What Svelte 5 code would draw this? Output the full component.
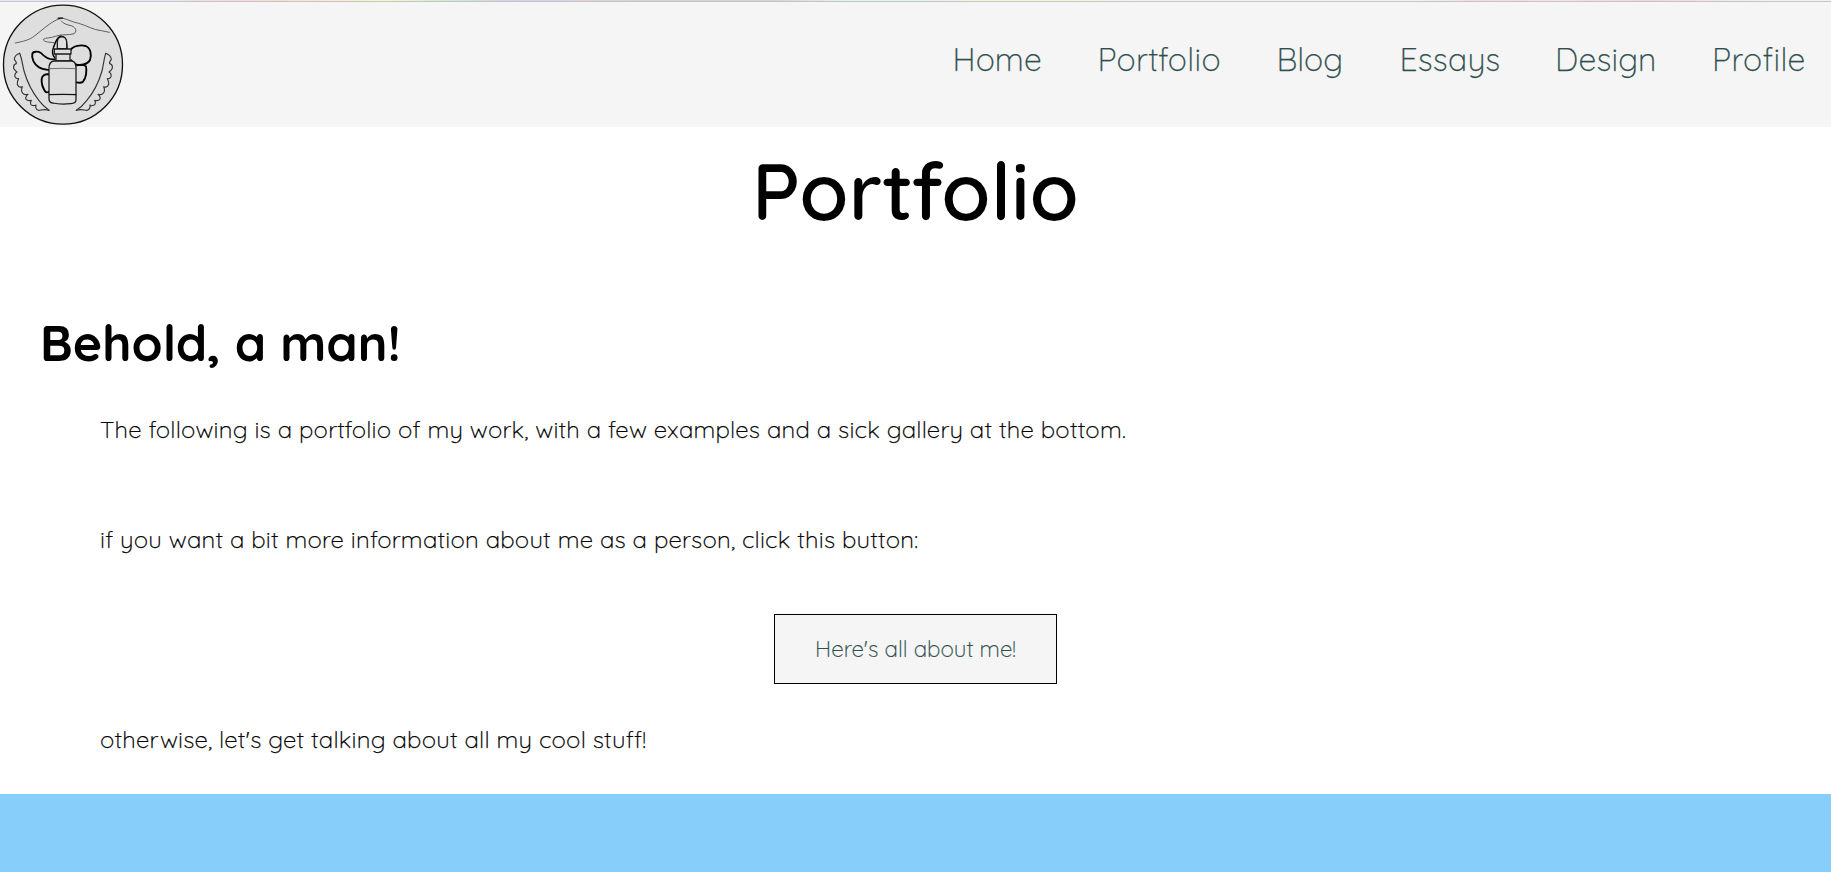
<script>
  const links = [
    { label: 'Home', track: 0.1 },
    { label: 'Portfolio', track: 0.4 },
    { label: 'Blog', track: 0.1 },
    { label: 'Essays', track: 0.15 },
    { label: 'Design', track: 0.15 },
    { label: 'Profile', track: 0.4 }
  ];
</script>

<div class="strip"></div>
<header>
  <svg class="logo" viewBox="0 6 390 375" width="130" height="125" fill="none" stroke="#111" stroke-linecap="round" stroke-linejoin="round">
    <circle cx="189" cy="194" r="178.5" fill="#dedede" stroke-width="4" />
    <g stroke="#555" stroke-width="2.8">
      <path d="M46 129C70 124 88 120 102 109C122 94 148 69 174 57L188 55C204 58 216 66 236 70C262 77 280 90 304 92L328 97" />
      <path d="M184 63C190 73 204 74 216 78C229 84 231 95 222 101C206 107 185 101 166 109C151 115 138 112 130 118C132 128 150 126 162 128" />
    </g>
    <path d="M175 55L187 54" stroke="#222" stroke-width="5" />
    <g stroke="#000" stroke-width="5.6">
      <path d="M165 174C156 166 156 151 160 144C165 130 170 112 182 109C194 108 200 118 201 146" stroke-width="4.4" />
      <path d="M213 149C219 137 243 134 257 138C273 144 275 166 270 180C263 193 240 199 226 192C217 188 216 184 214 181" />
      <path d="M164 178C148 180 132 169 123 159C113 153 99 154 97 161C94 174 102 194 117 202C127 209 138 209 148 210" />
      <path d="M228 196C240 194 253 194 258 199C261 214 258 235 249 245C243 250 234 248 229 247" />
      <path d="M147 223C134 221 126 227 125 237C124 249 130 266 136 275C140 279 144 277 148 275" />
    </g>
    <g fill="#dedede" stroke-width="3.8" stroke="#1a1a1a">
      <path d="M172 146V125C173 106 198 105 200 125V146Z" />
      <path d="M168 160H210V183H168Z" />
      <path d="M163 147H213V162H163Z" />
      <path d="M162 183H215C224 184 228 190 228 204V300C228 308 223 310 213 311C195 313 174 313 158 309C150 308 147 304 147 297V205C147 190 152 184 162 183Z" />
    </g>
    <path d="M148 206Q188 204 228 206" stroke="#555" stroke-width="2.4" />
    <path d="M148 284Q188 282 228 284" stroke-width="3.6" />
    <g stroke="#333" stroke-width="3.4">
      <path d="M59 160C50 162 43 170 43 178C48 184 50 187 49 191C42 193 40 198 41 205C44 211 47 214 51 216C45 219 44 225 45 230C48 236 52 237 56 236C52 244 50 252 54 257C58 263 63 262 67 260C63 269 65 278 71 282C75 285 80 284 84 283C77 289 75 294 79 299C84 303 90 302 94 301C90 308 91 314 96 316C101 318 106 316 108 315C106 323 109 329 115 331C123 332 130 325 147 331" />
      <path d="M59 160C67 180 68 199 73 216C82 247 99 279 117 302C127 315 137 324 147 331" />
      <path d="M317 160C326 162 334 170 334 178C329 184 327 187 329 191C336 193 338 198 337 205C334 211 331 214 327 216C333 219 334 225 333 230C330 236 326 237 322 236C326 244 328 252 324 257C320 263 315 262 311 260C315 269 313 278 307 282C303 285 298 284 294 283C301 289 302 294 299 299C294 303 288 302 284 301C288 308 286 314 281 316C276 318 271 316 270 315C271 323 268 329 262 331C254 332 246 325 229 331" />
      <path d="M317 160C311 180 310 199 305 216C296 247 279 279 260 302C250 315 240 324 229 331" />
    </g>
  </svg>
  <nav>
    {#each links as link}
      <a href="#top" style="letter-spacing: {link.track}px">{link.label}</a>
    {/each}
  </nav>
</header>

<main>
  <h1>Portfolio</h1>
  <h2>Behold, a man!</h2>
  <p>The following is a portfolio of my work, with a few examples and a sick gallery at the bottom.</p>
  <p class="ask">if you want a bit more information about me as a person, click this button:</p>
  <button>Here's all about me!</button>
  <p class="otherwise">otherwise, let's get talking about all my cool stuff!</p>
</main>
<section class="band"></section>

<style>
  :global(body) {
    background: #fff;
    overflow: hidden;
    font-family: Quicksand, Lato, 'Open Sans', sans-serif;
    font-weight: 300;
    color: #000;
  }
  .strip {
    height: 1px;
    border-bottom: 1px solid #c4c4c4;
    background: linear-gradient(90deg, #ece2f5 0 10%, #fbd6d8 13%, #fde5d0 17%, #fafac8 21%, #d0eed0 24%, #d0d5ea 28%, #e6d0e6 32%, #d4d4d0 36% 42%, #e0f3f8 46% 50%, #faf8d0 54% 58%, #f4f4f4 62% 77%, #f6d8e4 81%, #f4e4e8 85%, #f6d3e2 90%, #f4f4f4 97%);
  }
  header {
    display: flex;
    justify-content: space-between;
    height: 125px;
    background: #f5f5f5;
  }
  .logo {
    display: block;
  }
  nav {
    display: grid;
    grid-template-columns: 145px 179px 123px 155.5px 157px 119px;
    padding-top: 37px;
  }
  a {
    font-size: 32px;
    line-height: 40px;
    color: darkslategray;
    text-decoration: none;
    -webkit-text-stroke: 0.25px;
  }
  main {
    display: flex;
    flex-direction: column;
    height: 667px;
  }
  h1 {
    margin: 13px 0 0;
    font-size: 80px;
    line-height: 100px;
    font-weight: 600;
    text-align: center;
  }
  h2 {
    margin: 73px 0 0 40px;
    font-size: 50px;
    line-height: 60px;
    font-weight: 700;
  }
  p {
    margin: 41px 0 0 100px;
    font-size: 24px;
    line-height: 30px;
    letter-spacing: 0.22px;
    -webkit-text-stroke: 0.25px;
  }
  .ask {
    margin-top: 80px;
  }
  button {
    align-self: center;
    width: 283px;
    height: 70px;
    margin-top: 60px;
    padding: 0;
    border: 1px solid #000;
    background: #f5f5f5;
    color: darkslategray;
    font: inherit;
    font-size: 22.4px;
    -webkit-text-stroke: 0.2px;
  }
  .otherwise {
    margin-top: 40px;
  }
  .band {
    height: 78px;
    background: lightskyblue;
  }
</style>
